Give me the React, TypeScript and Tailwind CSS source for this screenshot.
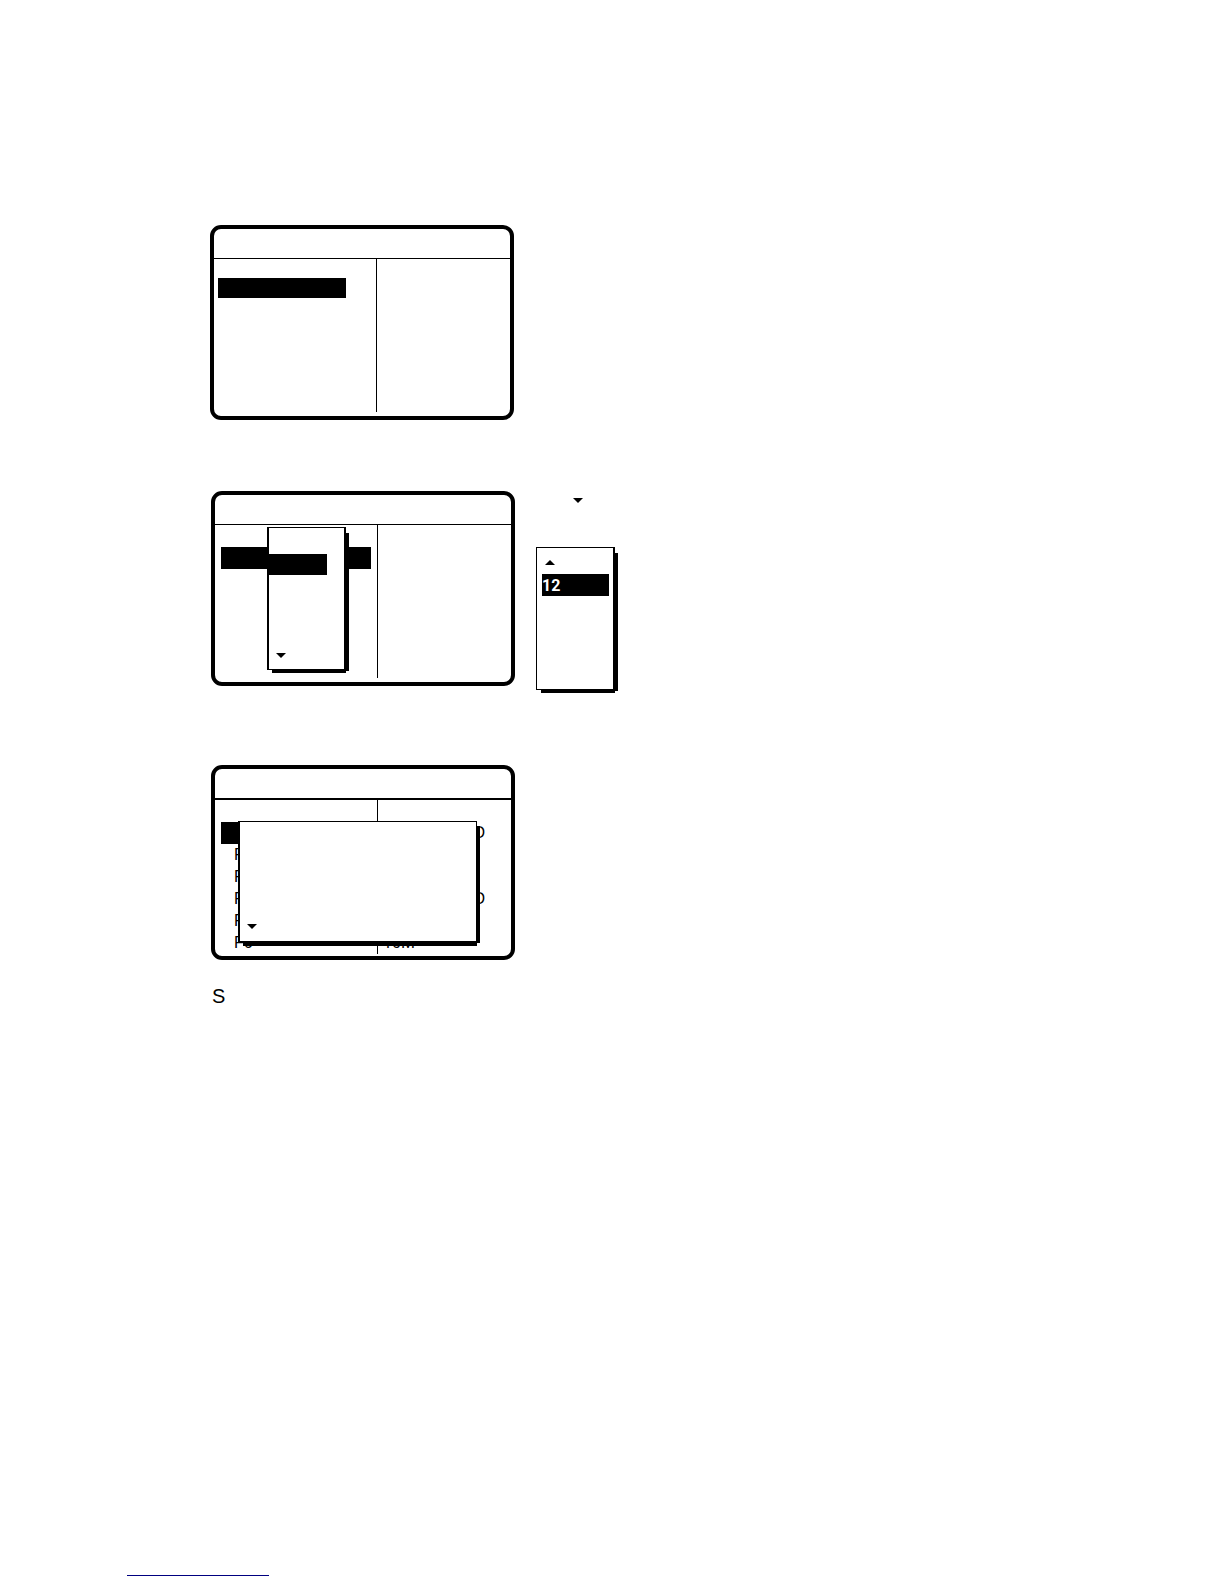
import React from "react";
import clsx from "clsx";

type PanelProps = {
    className?: string;
    headerClassName?: string;
    left: React.ReactNode;
    right?: React.ReactNode;
    children?: React.ReactNode;
};

const Arrow = ({ up = false }: { up?: boolean }) => (
    <svg viewBox="0 0 10 5" className="block h-[5px] w-[10px] fill-black" aria-hidden="true">
        {up ? <path d="M0 5 5 0l5 5z" /> : <path d="M0 0h10L5 5z" />}
    </svg>
);

const Panel = ({ className, headerClassName = "h-[30px] border-b", left, right, children }: PanelProps) => (
    <section
        className={clsx(
            "relative flex h-[195px] w-[304px] flex-col rounded-[11px] border-4 border-black bg-white pb-1",
            className
        )}
    >
        <header className={clsx("shrink-0 border-black", headerClassName)} />
        <div className="flex flex-1">
            <div className="w-[163px] border-r border-black">{left}</div>
            <div className="flex-1">{right}</div>
        </div>
        {children}
    </section>
);

/* Offset drop shadow: 3px strip to the right and below the box */
const Shadow = ({ className }: { className: string }) => (
    <>
        <div className={clsx("absolute left-full w-[3px] bg-black", className)} />
        <div className="absolute left-[5px] right-0 top-full h-[3px] bg-black" />
    </>
);

const App = () => {
    return (
        <main className="min-h-screen bg-white font-['Liberation_Sans',Arial,sans-serif] text-base text-black">
            <div className="flex flex-col items-start pl-[211px] pt-[225px]">
                {/* Function list */}
                <Panel className="-ml-px" left={<div className="ml-1 mt-[19px] h-5 w-32 bg-black" />} />

                {/* Channel menu, first and second page */}
                <div className="mt-[71px] flex items-start gap-[21px]">
                    <Panel left={<div className="ml-1.5 mt-[22px] h-[22px] w-[150px] bg-black" />}>
                        <div className="absolute left-[52px] top-8 h-[143px] w-[79px]">
                            <div className="flex h-full flex-col justify-between border-x-2 border-y border-black bg-white pb-[11px] pt-[26px]">
                                <div className="h-[21px] w-[58px] bg-black" />
                                <div className="pl-[7px]">
                                    <Arrow />
                                </div>
                            </div>
                            <Shadow className="-bottom-px top-1.5" />
                        </div>
                    </Panel>

                    <div className="pt-[7px]">
                        <div className="pl-[37px]">
                            <Arrow />
                        </div>
                        <div className="relative mt-11 h-[143px] w-[79px]">
                            <div className="h-full border border-r-2 border-black bg-white pl-[5px] pr-1 pt-3">
                                <div className="pl-[3px]">
                                    <Arrow up />
                                </div>
                                <div className="mt-[9px] h-[22px] bg-black font-[Roboto,sans-serif] font-bold leading-6 text-white">
                                    12
                                </div>
                            </div>
                            <Shadow className="-bottom-px top-1.5" />
                        </div>
                    </div>
                </div>

                {/* Function keys with a pop-up over them */}
                <Panel
                    className="mt-[75px]"
                    headerClassName="h-[31px] border-b-2"
                    left={
                        <ul className="grid h-full grid-rows-6 pl-1.5 pt-[22px] leading-[22px]">
                            <li className="w-[150px] bg-black" />
                            <li className="pl-[13px]">F</li>
                            <li className="pl-[13px]">F</li>
                            <li className="pl-[13px]">F</li>
                            <li className="pl-[13px]">F</li>
                            <li className="pl-[13px]">F6</li>
                        </ul>
                    }
                    right={
                        <ul className="grid h-full grid-rows-6 pl-[5px] pr-[26px] pt-[22px] leading-[22px]">
                            <li className="text-right">D</li>
                            <li />
                            <li />
                            <li className="text-right">D</li>
                            <li />
                            <li className="font-[Roboto,sans-serif]">10M</li>
                        </ul>
                    }
                >
                    <div className="absolute left-[23px] top-[52px] h-[122px] w-[239px]">
                        <div className="flex h-full flex-col justify-end border border-b-2 border-l-2 border-black bg-white pb-3 pl-[7px]">
                            <Arrow />
                        </div>
                        <Shadow className="bottom-0 top-[5px]" />
                    </div>
                </Panel>

                <p className="mt-[26px] pl-px text-xl leading-5">S</p>
            </div>

            {/* Footer link rule */}
            <div className="mt-[569px] pb-2 pl-[127px]">
                <a href="#" aria-label="Home" className="block h-px w-[142px] bg-[#000080]" />
            </div>
        </main>
    );
};

export default App;
